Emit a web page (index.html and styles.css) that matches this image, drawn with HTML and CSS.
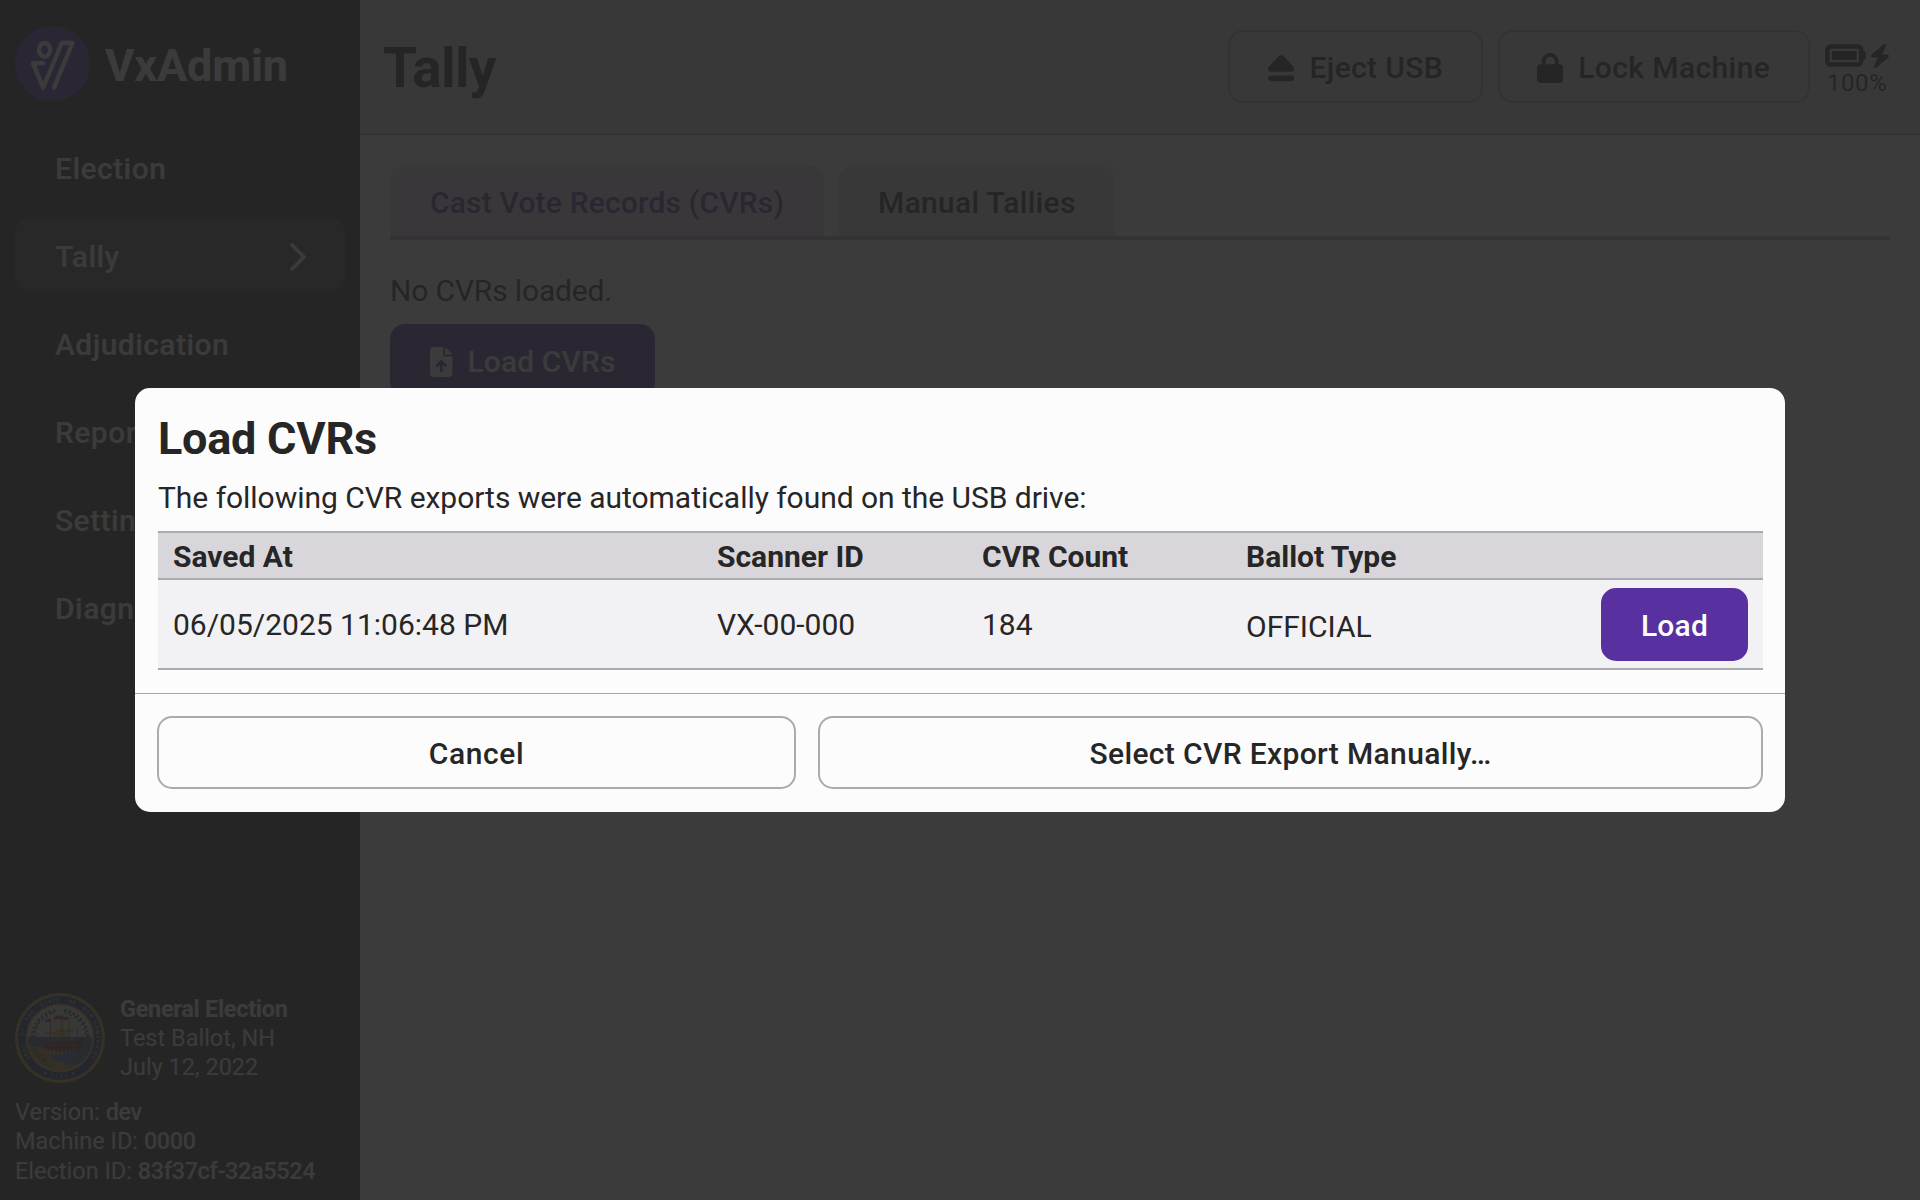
FILE: index.html
```html
<!DOCTYPE html>
<html lang="en">
<head>
<meta charset="utf-8">
<title>VxAdmin</title>
<link rel="stylesheet" href="styles.css">
</head>
<body>
<div class="app">
  <aside class="sidebar">
    <div class="brand">
      <svg class="brand-logo" viewBox="0 0 75 75">
        <circle cx="37.5" cy="37.5" r="37.5" fill="#5830a8"/>
        <g fill="none" stroke="#fcfcfc" stroke-width="4.4" stroke-linecap="round" stroke-linejoin="round">
          <ellipse cx="29.6" cy="23.8" rx="5.6" ry="6.8"/>
          <path d="M28.200 37.3H18L28.200 61.5 46.8 17H57.5L39 61.5"/>
        </g>
      </svg>
      <span class="brand-name">VxAdmin</span>
    </div>
    <nav class="nav">
      <a class="nav-item">Election</a>
      <a class="nav-item nav-item-active">Tally
        <svg class="chevron" viewBox="0 0 16 28"><path d="M2 2 14 14 2 26" fill="none" stroke="currentColor" stroke-width="3.6" stroke-linecap="round" stroke-linejoin="round"/></svg>
      </a>
      <a class="nav-item">Adjudication</a>
      <a class="nav-item">Reports</a>
      <a class="nav-item">Settings</a>
      <a class="nav-item">Diagnostics</a>
    </nav>
    <footer class="info">
      <div class="election">
        <svg class="seal" viewBox="0 0 180 180">
          <defs>
            <path id="ring" d="M40.600 143A72.500 72.500 0 1 1 139.400 143"/>
            <path id="ring-low" d="M40 151.900A79.500 79.500 0 0 0 140 151.900"/>
            <clipPath id="scene"><circle cx="90" cy="90" r="65"/></clipPath>
          </defs>
          <circle cx="90" cy="90" r="90" fill="#c79a1c"/>
          <circle cx="90" cy="90" r="84" fill="#16307c"/>
          <circle cx="90" cy="90" r="69" fill="#c79a1c"/>
          <circle cx="90" cy="90" r="65.500" fill="#dcdcdc"/>
          <g clip-path="url(#scene)">
            <path d="M90 84V50M90 84 78 54M90 84l12-30M90 84 67 60M90 84l23-24M90 84 60 69M90 84l30-15" stroke="#e8c44a" stroke-width="2.500"/>
            <circle cx="90" cy="84" r="14" fill="#eab72c"/>
            <path d="M20 88H160V125H20Z" fill="#3f6294"/>
            <path d="M20 106 60 108 100 120 130 130 160 122V160H20Z" fill="#b5872a"/>
            <path d="M72 130C90 120 125 118 150 124L140 140C110 146 90 142 72 130Z" fill="#3d6fb0"/>
            <path d="M48 92 60 98 122 98 136 86 130 114Q90 122 58 112Z" fill="#7c2020"/>
            <path d="M58 104H128" stroke="#c9a878" stroke-width="1.500" stroke-dasharray="3 4"/>
            <path d="M62 110V118M70 112V120M78 113V121M86 113V121M94 113V121M102 113V121M110 112V120M118 111V118" stroke="#d8d8d8" stroke-width="1.500"/>
            <path d="M71 96V52M94 96V46M108 96V54M125 92V66M54 94 40 84M60 80H82M86 76H116" stroke="#6a4a40" stroke-width="1.500" fill="none"/>
            <path d="M60 55q6-6 12-3v6q-6-3-12 2ZM78 48q10-6 16-1l14 1v5q-12 2-18-1-6-1-12 2Z" fill="#c03030"/>
          </g>
          <path class="wreath" d="M58 136A56 56 0 0 1 82 35M98 35A56 56 0 0 1 122 136"/>
          <path class="wreath wreath-inner" d="M60 132A51 51 0 0 1 80 40M100 40A51 51 0 0 1 120 132"/>
          <path d="M82 138H98L94 146 100 152H80L86 146Z" fill="#c79a1c"/>
          <text class="seal-text"><textPath href="#ring" startOffset="50%">SEAL · OF · THE · STATE · OF · NEW HAMPSHIRE</textPath></text>
          <text class="seal-text seal-year"><textPath href="#ring-low" startOffset="50%">★1776★</textPath></text>
        </svg>
        <div class="election-text">
          <strong>General Election</strong>
          <span>Test Ballot, NH</span>
          <span>July 12, 2022</span>
        </div>
      </div>
      <div class="machine">
        <span>Version: <b>dev</b></span>
        <span>Machine ID: <b>0000</b></span>
        <span>Election ID: <b>83f37cf-32a5524</b></span>
      </div>
    </footer>
  </aside>

  <div class="main">
    <header class="topbar">
      <h1 class="title">Tally</h1>
      <div class="topbar-actions">
        <button class="btn btn-outline btn-eject">
          <svg class="icon" viewBox="0 0 448 512" fill="currentColor"><path d="M224 32c13.500 0 26.300 5.600 35.400 15.600l176 192c12.900 14 16.200 34.300 8.600 51.800S419.200 320 400 320H48c-19.100 0-36.300-11.200-43.900-28.700s-4.300-37.800 8.600-51.800l176-192C197.700 37.600 210.500 32 224 32zM0 432c0-26.500 21.500-48 48-48H400c26.500 0 48 21.500 48 48s-21.500 48-48 48H48c-26.500 0-48-21.500-48-48z"/></svg>
          Eject USB
        </button>
        <button class="btn btn-outline btn-lock">
          <svg class="icon" viewBox="0 0 448 512" fill="currentColor"><path d="M144 144v48H304V144c0-44.200-35.800-80-80-80s-80 35.800-80 80zM80 192V144C80 64.500 144.500 0 224 0s144 64.500 144 144v48h16c35.300 0 64 28.700 64 64V448c0 35.300-28.700 64-64 64H64c-35.300 0-64-28.700-64-64V256c0-35.300 28.700-64 64-64H80z"/></svg>
          Lock Machine
        </button>
        <div class="battery">
          <div class="battery-icons">
            <svg class="icon-battery" viewBox="0 64 576 384" fill="currentColor"><path d="M464 160c8.800 0 16 7.200 16 16V336c0 8.800-7.200 16-16 16H80c-8.800 0-16-7.200-16-16V176c0-8.800 7.200-16 16-16H464zM80 96C35.800 96 0 131.800 0 176V336c0 44.200 35.800 80 80 80H464c44.200 0 80-35.800 80-80V320c17.700 0 32-14.300 32-32V224c0-17.700-14.300-32-32-32V176c0-44.200-35.800-80-80-80H80zm368 96H96V320H448V192z"/></svg>
            <svg class="icon-bolt" viewBox="32 0 384 512" fill="currentColor"><path d="M349.400 44.600c5.900-13.700 1.500-29.700-10.600-38.500s-28.600-8-39.900 1.800l-256 224c-10 8.800-13.600 22.900-8.900 35.300S50.700 288 64 288H175.500L98.600 467.400c-5.900 13.700-1.500 29.700 10.600 38.500s28.600 8 39.900-1.800l256-224c10-8.800 13.600-22.900 8.900-35.300s-16.600-20.700-30-20.700H272.500L349.400 44.600z"/></svg>
          </div>
          <span class="battery-level">100%</span>
        </div>
      </div>
    </header>

    <main class="content">
      <div class="tabs">
        <div class="tab tab-selected">Cast Vote Records (CVRs)</div>
        <div class="tab">Manual Tallies</div>
      </div>
      <p class="empty">No CVRs loaded.</p>
      <button class="btn btn-primary load-cvrs">
        <svg class="icon-file" viewBox="0 0 384 512" fill="currentColor"><path d="M64 0C28.700 0 0 28.700 0 64V448c0 35.300 28.700 64 64 64H320c35.300 0 64-28.700 64-64V160H256c-17.700 0-32-14.300-32-32V0H64zM256 0V128H384L256 0zM216 408c0 13.300-10.700 24-24 24s-24-10.700-24-24V305.900l-31 31c-9.400 9.400-24.600 9.400-33.900 0s-9.400-24.600 0-33.900l72-72c9.400-9.400 24.600-9.400 33.900 0l72 72c9.400 9.400 9.400 24.600 0 33.900s-24.600 9.400-33.900 0l-31-31V408z"/></svg>
        Load CVRs
      </button>
    </main>
  </div>
</div>

<div class="overlay">
  <section class="modal">
    <div class="modal-body">
      <h2 class="modal-title">Load CVRs</h2>
      <p class="modal-text">The following CVR exports were automatically found on the USB drive:</p>
      <table class="exports">
        <colgroup><col class="col-saved"><col class="col-scanner"><col class="col-count"><col class="col-type"><col></colgroup>
        <thead>
          <tr><th>Saved At</th><th>Scanner ID</th><th>CVR Count</th><th>Ballot Type</th><th></th></tr>
        </thead>
        <tbody>
          <tr>
            <td>06/05/2025 11:06:48 PM</td>
            <td>VX-00-000</td>
            <td>184</td>
            <td><span class="ballot-type">OFFICIAL</span></td>
            <td class="cell-action"><button class="btn btn-primary">Load</button></td>
          </tr>
        </tbody>
      </table>
    </div>
    <div class="modal-actions">
      <button class="btn btn-outline btn-cancel">Cancel</button>
      <button class="btn btn-outline btn-select">Select CVR Export Manually…</button>
    </div>
  </section>
</div>
</body>
</html>
```
FILE: styles.css
```css
* {
  box-sizing: border-box;
}

html,
body {
  margin: 0;
  height: 100%;
  overflow: hidden;
}

body {
  font-family: Roboto, "Liberation Sans", sans-serif;
  font-size: 30px;
  line-height: 36px;
  color: #262626;
  background: #fcfcfc;
}

h1,
h2,
p {
  margin: 0;
}

.app {
  display: flex;
  height: 1200px;
}

/* Sidebar */
.sidebar {
  display: flex;
  flex-direction: column;
  width: 360px;
  padding: 26px 15px 14px;
  color: #fcfcfc;
  background: #262626;
}

.brand {
  display: flex;
  align-items: center;
  gap: 15px;
  height: 75px;
}

.brand-logo {
  width: 75px;
  height: 75px;
}

.brand-name {
  padding-top: 4px;
  font-size: 45px;
  font-weight: 700;
  line-height: 54px;
  letter-spacing: -0.150px;
}

.nav {
  display: flex;
  flex-direction: column;
  gap: 15px;
  margin-top: 30px;
}

.nav-item {
  display: flex;
  align-items: center;
  justify-content: space-between;
  height: 73px;
  padding: 2px 39px 0 40px;
  border-radius: 15px;
  font-weight: 500;
  letter-spacing: 0.450px;
}

.nav-item-active {
  background: #444248;
}

.chevron {
  width: 16px;
  height: 28px;
}

.info {
  display: flex;
  flex-direction: column;
  gap: 15px;
  margin-top: auto;
  font-size: 23.500px;
  line-height: 29.300px;
}

.election {
  display: flex;
  align-items: center;
  gap: 15px;
}

.seal {
  width: 90px;
  height: 90px;
}

.wreath {
  fill: none;
  stroke: #2e6a3c;
  stroke-width: 6;
  stroke-dasharray: 5 4;
}

.wreath-inner {
  stroke-width: 4;
  stroke-dasharray: 4 6;
}

.seal-text {
  font-size: 10px;
  font-weight: 500;
  letter-spacing: 2.200px;
  text-anchor: middle;
  fill: #d8b64a;
}

.seal-year {
  letter-spacing: 5px;
}

.election-text,
.machine {
  display: flex;
  flex-direction: column;
}

.election-text {
  padding-top: 1px;
}

.election-text strong {
  letter-spacing: -0.300px;
}

.machine b {
  font-weight: 500;
  letter-spacing: -0.380px;
}

/* Buttons */
.btn {
  display: flex;
  align-items: center;
  justify-content: center;
  gap: 15px;
  height: 73px;
  padding: 2px 38px 0;
  border: 2px solid transparent;
  border-radius: 15px;
  font: 500 30px/36px Roboto, "Liberation Sans", sans-serif;
  letter-spacing: 0.400px;
  color: #262626;
  background: none;
  white-space: nowrap;
}

.btn-outline {
  border-color: #aba9b1;
}

.btn-primary {
  color: #fcfcfc;
  background: #5830a0;
  border-color: #5830a0;
}

.btn-eject {
  letter-spacing: 0.350px;
}

.btn-lock {
  padding-left: 37px;
}

.icon {
  width: 26.250px;
  height: 30px;
}

.icon-file {
  width: 22.500px;
  height: 30px;
}

/* Main area */
.main {
  flex: 1;
  min-width: 0;
}

.topbar {
  display: flex;
  align-items: center;
  justify-content: space-between;
  height: 135px;
  padding: 0 31px 0 23px;
  border-bottom: 2px solid #aba9b1;
  background: #dedce1;
}

.title {
  padding-top: 2px;
  font-size: 55px;
  font-weight: 700;
  line-height: 66px;
  letter-spacing: -0.700px;
}

.topbar-actions {
  display: flex;
  align-items: center;
  gap: 15px;
}

.battery {
  display: flex;
  flex-direction: column;
  align-items: center;
  padding-top: 7px;
}

.battery-icons {
  display: flex;
  align-items: center;
  gap: 5px;
}

.icon-battery {
  width: 40.800px;
  height: 27px;
}

.icon-bolt {
  width: 18px;
  height: 24px;
}

.battery-level {
  font-size: 24px;
  line-height: 29px;
  letter-spacing: 0.600px;
}

.content {
  padding: 30px;
}

.tabs {
  display: flex;
  gap: 15px;
  border-bottom: 4px solid #aba9b1;
}

.tab {
  height: 71px;
  padding: 20px 39.500px 0;
  border-radius: 15px 15px 0 0;
  font-weight: 500;
  letter-spacing: 0.300px;
  background: #dedce1;
}

.tab-selected {
  padding-left: 40px;
  letter-spacing: 0.180px;
  color: #5830a0;
  background: #e3d7e6;
}

.empty {
  margin-top: 33px;
  letter-spacing: -0.150px;
}

.load-cvrs {
  margin-top: 15px;
  letter-spacing: 0.100px;
}

/* Modal */
.overlay {
  position: absolute;
  inset: 0;
  display: flex;
  align-items: center;
  justify-content: center;
  background: rgba(38, 38, 38, 0.9);
}

.modal {
  width: 1650px;
  height: 424px;
  border-radius: 15px;
  color: #262626;
  background: #fcfcfc;
}

.modal-body {
  padding: 24px 22px 23px 23px;
}

.modal-title {
  font-size: 45px;
  font-weight: 700;
  line-height: 54px;
  letter-spacing: -0.250px;
}

.modal-text {
  margin: 14px 0 15px;
  letter-spacing: -0.035px;
}

.exports {
  width: 100%;
  table-layout: fixed;
  border-collapse: separate;
  border-spacing: 0;
}

.col-saved {
  width: 544px;
}

.col-scanner {
  width: 265px;
}

.col-count,
.col-type {
  width: 264px;
}

.exports th {
  height: 49px;
  padding: 2px 15px 0;
  border-top: 2px solid #aba9b1;
  border-bottom: 2px solid #aba9b1;
  text-align: left;
  font-weight: 700;
  background: #d8d6db;
}

.exports td {
  height: 90px;
  padding: 1px 15px 0;
  border-bottom: 2px solid #aba9b1;
  background: #f2f1f4;
}

.ballot-type {
  display: block;
  padding-top: 4px;
}

.exports .cell-action {
  padding-top: 0;
}

.cell-action .btn {
  margin-left: auto;
  padding-top: 3px;
  letter-spacing: 0.200px;
}

.modal-actions {
  display: flex;
  gap: 22px;
  padding: 22px;
  border-top: 1px solid #a5a4a9;
}

.btn-cancel {
  width: 639px;
  letter-spacing: 0.600px;
}

.btn-select {
  flex: 1;
  letter-spacing: 0.360px;
}
```
